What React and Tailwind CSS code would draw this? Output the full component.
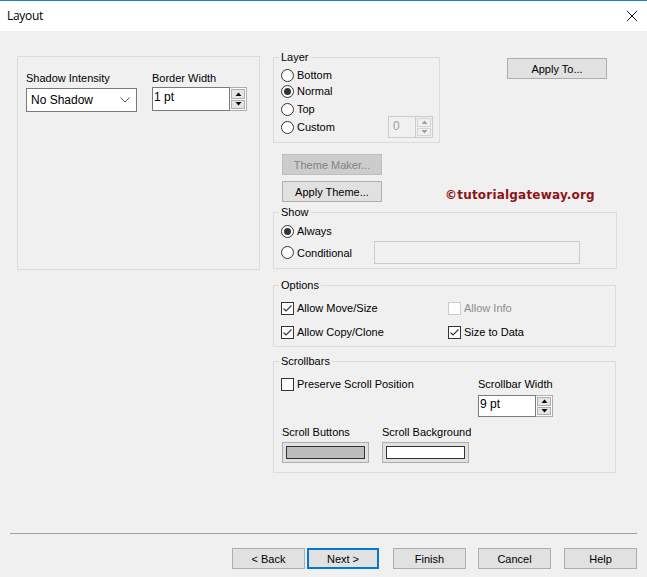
import React from "react";

function Radio({ checked, label, className = "" }) {
  return (
    <div className={"flex items-center h-[16px] " + className}>
      <span className="w-[13px] h-[13px] rounded-full border border-[#333333] bg-white flex items-center justify-center shrink-0">
        {checked && <span className="w-[7px] h-[7px] rounded-full bg-[#333333]" />}
      </span>
      <span className="ml-[3px] leading-[14px]">{label}</span>
    </div>
  );
}

function Check({ checked, label, disabled }) {
  return (
    <div className="flex items-center h-[16px]">
      <span
        className={
          "w-[13px] h-[13px] border bg-white flex items-center justify-center shrink-0 " +
          (disabled ? "border-[#cccccc]" : "border-[#333333]")
        }
      >
        {checked && (
          <svg width="11" height="11" viewBox="0 0 11 11">
            <polyline points="1.5,5.5 4,8 9.5,2.5" fill="none" stroke="#333333" strokeWidth="1.1" />
          </svg>
        )}
      </span>
      <span className={"ml-[3px] leading-[14px] " + (disabled ? "text-[#8d8d8d]" : "")}>{label}</span>
    </div>
  );
}

function Tri({ up, color = "#000" }) {
  return (
    <svg width="7" height="4" viewBox="0 0 7 4">
      {up ? <polygon points="0.5,4 3.5,0.5 6.5,4" fill={color} /> : <polygon points="0.5,0 3.5,3.5 6.5,0" fill={color} />}
    </svg>
  );
}

function SpinBtns({ disabled }) {
  const b = disabled ? "border-[#d4d4d4] bg-[#f0f0f0]" : "border-[#adadad] bg-[#e5e5e5]";
  const c = disabled ? "#a0a0a0" : "#000";
  return (
    <div className={"w-[17px] flex flex-col gap-[1px] p-[1px] border border-l-0 " + (disabled ? "border-[#cccccc] bg-[#f0f0f0]" : "border-[#adadad] bg-white")}>
      <div className={"flex-1 border flex items-center justify-center " + b}>
        <Tri up color={c} />
      </div>
      <div className={"flex-1 border flex items-center justify-center " + b}>
        <Tri color={c} />
      </div>
    </div>
  );
}

function Btn({ children, className = "", disabled, focus }) {
  return (
    <div
      className={
        "h-[21px] flex items-center justify-center leading-[14px] " +
        (disabled
          ? "bg-[#cccccc] border border-[#bfbfbf] text-[#838383] "
          : focus
          ? "bg-[#e1e1e1] border-2 border-[#0078d7] "
          : "bg-[#e1e1e1] border border-[#adadad] ") +
        className
      }
    >
      {children}
    </div>
  );
}

function Legend({ children }) {
  return <legend className="ml-[-2px] px-[2px] leading-[14px] h-[14px]">{children}</legend>;
}

function Swatch({ fill }) {
  return (
    <div className="w-[87px] h-[21px] border border-[#adadad] bg-[#e1e1e1] p-[3px]">
      <div className={"w-full h-full border border-[#333333] " + fill} />
    </div>
  );
}

export default function App() {
  return (
    <div className="w-[647px] h-[577px] bg-[#f0f0f0] flex flex-col font-['Liberation_Sans',Arial,sans-serif] text-[11px] text-black overflow-hidden">
      {/* Title bar */}
      <div className="h-[31px] bg-white border-t border-[#1883d7] flex items-center justify-between pl-[7px] pr-[9px] shrink-0">
        <span className="text-[12px] leading-[16px] mt-[-1px] font-['Open_Sans',sans-serif] tracking-[-0.3px]">Layout</span>
        <svg width="12" height="12" viewBox="0 0 12 12">
          <line x1="1" y1="1" x2="11" y2="11" stroke="#111" strokeWidth="1" />
          <line x1="11" y1="1" x2="1" y2="11" stroke="#111" strokeWidth="1" />
        </svg>
      </div>

      {/* Body */}
      <div className="flex pl-[17px] pt-[19px]">
        {/* Left panel */}
        <div className="mt-[6px] w-[243px] h-[214px] border border-[#dcdcdc] pl-[8px] pt-[14px] flex">
          <div className="flex flex-col w-[111px]">
            <span className="leading-[14px] h-[14px]">Shadow Intensity</span>
            <div className="mt-[3px] h-[24px] bg-white border border-[#7a7a7a] flex items-center justify-between pl-[4px] pr-[6px]">
              <span className="text-[12px] leading-[14px]">No Shadow</span>
              <svg width="10" height="6" viewBox="0 0 10 6">
                <polyline points="0.5,0.5 5,5 9.5,0.5" fill="none" stroke="#555" strokeWidth="1" />
              </svg>
            </div>
          </div>
          <div className="flex flex-col ml-[15px]">
            <span className="leading-[14px] h-[14px]">Border Width</span>
            <div className="mt-[2px] h-[24px] w-[95px] flex">
              <div className="flex-1 bg-white border border-[#7a7a7a] pl-[1px] pt-[2px] leading-[14px] text-[12px]">1 pt</div>
              <SpinBtns />
            </div>
          </div>
        </div>

        {/* Right column */}
        <div className="ml-[13px] w-[344px] flex flex-col">
          <div className="flex items-start">
            <fieldset className="w-[167px] border border-[#dcdcdc] pl-[7px] pr-[6px] pb-[7px]">
              <Legend>Layer</Legend>
              <Radio className="mt-[3px]" label="Bottom" />
              <Radio checked label="Normal" />
              <Radio className="mt-[2px]" label="Top" />
              <div className="mt-[2px] h-[16px] flex items-center justify-between">
                <Radio label="Custom" />
                <div className="h-[22px] w-[45px] flex">
                  <div className="flex-1 bg-[#f0f0f0] border border-[#cccccc] pl-[4px] pt-[2px] text-[12px] leading-[14px] text-[#a0a0a0]">0</div>
                  <SpinBtns disabled />
                </div>
              </div>
            </fieldset>
            <Btn className="ml-[67px] mt-[8px] w-[100px]">Apply To...</Btn>
          </div>

          <Btn disabled className="ml-[9px] mt-[11px] w-[100px]">Theme Maker...</Btn>
          <div className="flex items-start mt-[6px]">
            <Btn className="ml-[9px] w-[100px]">Apply Theme...</Btn>
            <span className="ml-[63px] mt-[7px] font-['DejaVu_Sans',Verdana,sans-serif] font-bold text-[12px] leading-[14px] text-[#8c1414] tracking-[0.2px]">
              ©tutorialgateway.org
            </span>
          </div>

          <fieldset className="mt-[3px] w-[344px] border border-[#dcdcdc] pl-[7px] pb-[4px]">
            <Legend>Show</Legend>
            <Radio className="mt-[4px]" checked label="Always" />
            <div className="mt-[2px] h-[23px] flex items-center">
              <Radio className="w-[93px]" label="Conditional" />
              <div className="w-[206px] h-[23px] bg-[#f0f0f0] border border-[#cccccc]" />
            </div>
          </fieldset>

          <fieldset className="mt-[9px] w-[343px] border border-[#dcdcdc] pl-[7px] pb-[6px]">
            <Legend>Options</Legend>
            <div className="mt-[8px] flex">
              <div className="w-[167px]">
                <Check checked label="Allow Move/Size" />
              </div>
              <Check disabled label="Allow Info" />
            </div>
            <div className="mt-[8px] flex">
              <div className="w-[167px]">
                <Check checked label="Allow Copy/Clone" />
              </div>
              <Check checked label="Size to Data" />
            </div>
          </fieldset>

          <fieldset className="mt-[7px] w-[343px] border border-[#dcdcdc] pl-[7px] pb-[9px]">
            <Legend>Scrollbars</Legend>
            <div className="mt-[8px] flex items-start">
              <div className="w-[197px]">
                <Check label="Preserve Scroll Position" />
              </div>
              <div className="flex flex-col">
                <span className="h-[16px] leading-[16px]">Scrollbar Width</span>
                <div className="mt-[3px] h-[22px] w-[75px] flex">
                  <div className="flex-1 bg-white border border-[#7a7a7a] pl-[1px] pt-[1px] leading-[14px] text-[12px]">9 pt</div>
                  <SpinBtns />
                </div>
              </div>
            </div>
            <div className="mt-[7px] flex">
              <div className="flex flex-col w-[101px] pl-[1px]">
                <span className="h-[16px] leading-[16px]">Scroll Buttons</span>
                <div className="mt-[2px]">
                  <Swatch fill="bg-[#bcbcbc]" />
                </div>
              </div>
              <div className="flex flex-col">
                <span className="h-[16px] leading-[16px]">Scroll Background</span>
                <div className="mt-[2px]">
                  <Swatch fill="bg-white" />
                </div>
              </div>
            </div>
          </fieldset>
        </div>
      </div>

      {/* Footer */}
      <div className="mt-auto pb-[8px]">
        <div className="mx-[10px] h-px bg-[#a0a0a0]" />
        <div className="mt-[14px] flex pl-[232px]">
          <Btn className="w-[73px]">&lt; Back</Btn>
          <Btn focus className="ml-[2px] w-[72px]">Next &gt;</Btn>
          <Btn className="ml-[14px] w-[73px]">Finish</Btn>
          <Btn className="ml-[12px] w-[73px]">Cancel</Btn>
          <Btn className="ml-[13px] w-[73px]">Help</Btn>
        </div>
      </div>
    </div>
  );
}
